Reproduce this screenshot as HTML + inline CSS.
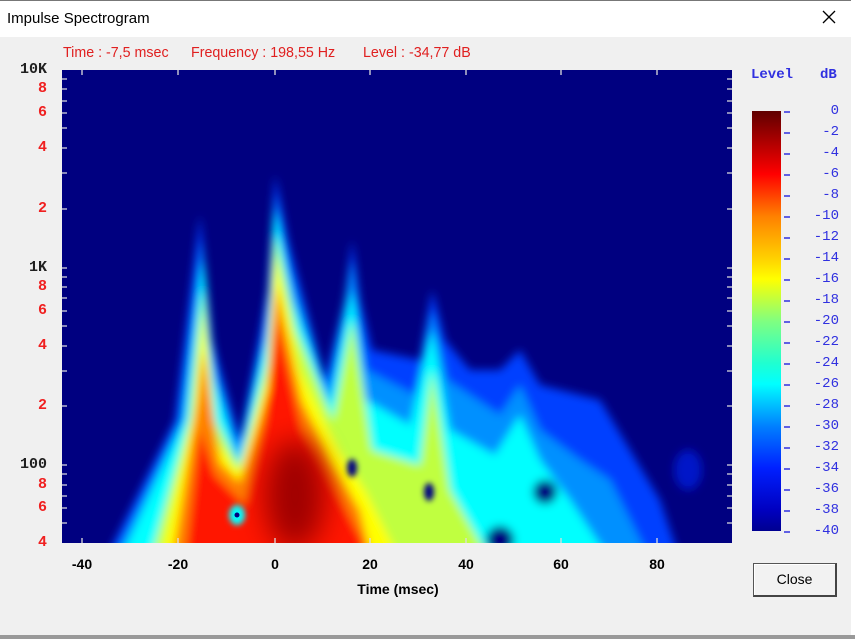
<!DOCTYPE html>
<html><head><meta charset="utf-8"><style>
body{margin:0;width:855px;height:639px;overflow:hidden;background:#f0f0f0;font-family:"Liberation Sans",sans-serif;position:relative}
.title{position:absolute;left:0;top:0;width:851px;height:37px;background:#fff;border-top:1px solid #777;box-sizing:border-box}
.title span{position:absolute;left:7px;top:9px;font-size:15px;color:#000}
.close-x{position:absolute;left:822px;top:9px}
.edge{position:absolute;left:851px;top:0;width:4px;height:639px;background:#fff}
.bot{position:absolute;left:0;top:635px;width:855px;height:4px;background:#999}
.info{position:absolute;top:44px;font-size:15px;color:#e02020;font-family:"Liberation Sans",sans-serif;transform-origin:left;white-space:nowrap}
.yl{position:absolute;width:47px;left:0;text-align:right;font:bold 15px "Liberation Mono",monospace;color:#f02020}
.yl.k{color:#202020}
.xl{position:absolute;top:556px;width:40px;text-align:center;font:bold 14px "Liberation Sans",sans-serif;color:#000}
.cl{position:absolute;left:790px;width:49px;text-align:right;font:14px "Liberation Mono",monospace;color:#3030e0}
.btn{position:absolute;left:753px;top:563px;width:84px;height:34px;box-sizing:border-box;border:1px solid #555;border-right:2px solid #444;border-bottom:2px solid #444;background:#f2f2f2;font-size:14px;text-align:center;line-height:30px;box-shadow:inset 1px 1px 0 #fff}
</style></head><body>
<div class="title"><span>Impulse Spectrogram</span>
<svg class="close-x" width="14" height="14"><path d="M1 1L13 13M13 1L1 13" stroke="#000" stroke-width="1.3"/></svg></div>
<div class="edge"></div><div class="bot"></div>
<div class="info" style="left:63px;transform:scaleX(0.95)">Time : -7,5 msec</div>
<div class="info" style="left:191px;transform:scaleX(0.95)">Frequency : 198,55 Hz</div>
<div class="info" style="left:363px;transform:scaleX(0.95)">Level : -34,77 dB</div>

<svg style="position:absolute;left:0;top:0" width="855" height="639">
<defs>
<clipPath id="cp"><rect x="62" y="70" width="670" height="473"/></clipPath>
<filter id="b" x="-20%" y="-20%" width="140%" height="140%"><feGaussianBlur stdDeviation="4.5"/></filter>
<filter id="b3" x="-50%" y="-50%" width="200%" height="200%"><feGaussianBlur stdDeviation="14"/></filter>
<filter id="b2"><feGaussianBlur stdDeviation="3"/></filter>
<linearGradient id="cb" x1="0" y1="0" x2="0" y2="1">
<stop offset="0" stop-color="#600000"/><stop offset="0.15" stop-color="#ff0000"/><stop offset="0.25" stop-color="#ff8000"/><stop offset="0.35" stop-color="#ffd000"/><stop offset="0.4" stop-color="#ffff00"/><stop offset="0.5" stop-color="#80ff80"/><stop offset="0.6" stop-color="#20ffd0"/><stop offset="0.65" stop-color="#00ffff"/><stop offset="0.75" stop-color="#0080ff"/><stop offset="0.85" stop-color="#0020ff"/><stop offset="0.95" stop-color="#0000c0"/><stop offset="1" stop-color="#000090"/>
</linearGradient>
</defs>
<rect x="62" y="70" width="670" height="473" fill="#000080"/>
<g clip-path="url(#cp)">
<g filter="url(#b)">
<polygon fill="#0040ff" points="105,560 175,420 200,215 212,340 240,440 268,290 275,175 288,240 325,380 345,300 352,240 360,300 372,350 420,360 432,290 445,340 470,370 500,370 520,350 540,385 600,400 612,420 660,500 680,560"/>
<polygon fill="#0090ff" points="112,560 180,420 202,240 213,360 240,450 268,320 275,195 290,270 328,392 352,260 366,370 415,395 432,310 447,380 500,415 520,385 540,430 580,460 610,480 650,560"/>
<polygon fill="#00ffff" points="120,560 185,420 203,260 214,380 238,462 266,340 275,210 292,300 330,405 352,290 366,400 410,425 432,330 450,430 495,455 520,415 540,460 570,500 610,560"/>
<polygon fill="#c0ff40" points="150,560 190,420 203,290 215,420 240,468 268,360 275,235 296,330 333,420 352,320 372,450 420,465 432,370 450,490 490,560"/>
<polygon fill="#ffff00" points="160,560 194,410 203,310 216,440 238,472 266,380 275,255 300,370 338,450 365,490 400,560"/>
<polygon fill="#ff8000" points="172,560 198,400 203,350 220,462 240,482 268,390 276,285 302,400 330,460 360,510 372,560"/>
<polygon fill="#ff1800" points="185,560 200,430 215,475 245,505 265,420 277,320 302,430 338,495 362,540 365,560"/>
<ellipse fill="#000080" cx="500" cy="540" rx="14" ry="14"/>
<ellipse fill="#000080" cx="545" cy="492" rx="12" ry="12"/>
<ellipse fill="#0018c8" cx="688" cy="470" rx="14" ry="20"/>
</g>
<ellipse fill="#a00000" cx="295" cy="495" rx="30" ry="55" filter="url(#b3)"/>
<g filter="url(#b2)">
<ellipse fill="#000080" cx="352" cy="468" rx="5" ry="9"/>
<ellipse fill="#000080" cx="429" cy="492" rx="5" ry="9"/>
<ellipse fill="#00ffff" cx="237" cy="515" rx="8" ry="10"/>
</g>
<circle cx="237" cy="515" r="2.5" fill="#000080"/>
</g>
<g stroke="#ddd" stroke-width="1.3">
<path d="M82 70v5M178 70v5M275 70v5M370 70v5M466 70v5M561 70v5M657 70v5"/>
<path d="M82 543v-5M178 543v-5M275 543v-5M370 543v-5M466 543v-5M561 543v-5M657 543v-5"/>
<path d="M62 79h5M62 89h5M62 101h5M62 113h5M62 128h5M62 148h5M62 173h5M62 209h5M62 268h5M62 277h5M62 287h5M62 298h5M62 311h5M62 326h5M62 346h5M62 371h5M62 406h5M62 465h5M62 474h5M62 485h5M62 496h5M62 508h5M62 523h5"/>
<path d="M732 79h-5M732 89h-5M732 101h-5M732 113h-5M732 128h-5M732 148h-5M732 173h-5M732 209h-5M732 268h-5M732 277h-5M732 287h-5M732 298h-5M732 311h-5M732 326h-5M732 346h-5M732 371h-5M732 406h-5M732 465h-5M732 474h-5M732 485h-5M732 496h-5M732 508h-5M732 523h-5"/>
</g>
<rect x="752" y="111" width="29" height="420" fill="url(#cb)"/>
</svg>

<div class="yl k" style="top:61px">10K</div>
<div class="yl" style="top:80px">8</div>
<div class="yl" style="top:104px">6</div>
<div class="yl" style="top:139px">4</div>
<div class="yl" style="top:200px">2</div>
<div class="yl k" style="top:259px">1K</div>
<div class="yl" style="top:278px">8</div>
<div class="yl" style="top:302px">6</div>
<div class="yl" style="top:337px">4</div>
<div class="yl" style="top:397px">2</div>
<div class="yl k" style="top:456px">100</div>
<div class="yl" style="top:476px">8</div>
<div class="yl" style="top:499px">6</div>
<div class="yl" style="top:534px">4</div>

<div class="xl" style="left:62px">-40</div>
<div class="xl" style="left:158px">-20</div>
<div class="xl" style="left:255px">0</div>
<div class="xl" style="left:350px">20</div>
<div class="xl" style="left:446px">40</div>
<div class="xl" style="left:541px">60</div>
<div class="xl" style="left:637px">80</div>
<div style="position:absolute;left:330px;top:581px;width:136px;text-align:center;font:bold 14px 'Liberation Sans',sans-serif">Time (msec)</div>

<div style="position:absolute;left:751px;top:67px;font:bold 14px 'Liberation Mono',monospace;color:#3030e0">Level</div>
<div style="position:absolute;left:820px;top:67px;font:bold 14px 'Liberation Mono',monospace;color:#3030e0">dB</div>

<div class="cl" style="top:103px">0</div>
<div class="cl" style="top:124px">-2</div>
<div class="cl" style="top:145px">-4</div>
<div class="cl" style="top:166px">-6</div>
<div class="cl" style="top:187px">-8</div>
<div class="cl" style="top:208px">-10</div>
<div class="cl" style="top:229px">-12</div>
<div class="cl" style="top:250px">-14</div>
<div class="cl" style="top:271px">-16</div>
<div class="cl" style="top:292px">-18</div>
<div class="cl" style="top:313px">-20</div>
<div class="cl" style="top:334px">-22</div>
<div class="cl" style="top:355px">-24</div>
<div class="cl" style="top:376px">-26</div>
<div class="cl" style="top:397px">-28</div>
<div class="cl" style="top:418px">-30</div>
<div class="cl" style="top:439px">-32</div>
<div class="cl" style="top:460px">-34</div>
<div class="cl" style="top:481px">-36</div>
<div class="cl" style="top:502px">-38</div>
<div class="cl" style="top:523px">-40</div>
<svg style="position:absolute;left:783px;top:105px" width="10" height="430"><g stroke="#3030e0" stroke-width="1.5">
<path d="M1 7h6M1 28h6M1 49h6M1 70h6M1 91h6M1 112h6M1 133h6M1 154h6M1 175h6M1 196h6M1 217h6M1 238h6M1 259h6M1 280h6M1 301h6M1 322h6M1 343h6M1 364h6M1 385h6M1 406h6M1 427h6"/></g></svg>

<div class="btn">Close</div>
</body></html>
